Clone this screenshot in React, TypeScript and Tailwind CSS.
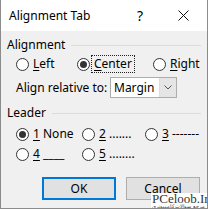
import React from "react";

function Radio({ checked }: { checked?: boolean }) {
  return (
    <span className="flex h-[13px] w-[13px] shrink-0 items-center justify-center rounded-full border border-[#333333] bg-white">
      {checked && <span className="h-[7px] w-[7px] rounded-full bg-[#333333]" />}
    </span>
  );
}

function Option({
  checked,
  focus,
  u,
  rest,
  className,
}: {
  checked?: boolean;
  focus?: boolean;
  u: string;
  rest: string;
  className?: string;
}) {
  return (
    <div className={"flex items-center " + (className ?? "")}>
      <Radio checked={checked} />
      <span
        className={
          "ml-[2px] px-[2px] leading-[16px] " +
          (focus ? "outline outline-1 outline-dotted outline-[#222]" : "outline outline-1 outline-transparent")
        }
      >
        <span className="underline underline-offset-2">{u}</span>
        {rest}
      </span>
    </div>
  );
}

function GroupHeader({ label }: { label: string }) {
  return (
    <div className="flex h-[16px] items-center">
      <span className="leading-[16px]">{label}</span>
      <div className="ml-[6px] mr-[6px] h-px flex-1 bg-[#dcdcdc]" />
    </div>
  );
}

export default function App() {
  return (
    <div
      className="relative h-[209px] w-[208px] overflow-hidden border-x border-b border-[#8c8c8c] bg-[#f0f0f0] text-[12px] text-black"
      style={{ fontFamily: '"Noto Sans", "Open Sans", sans-serif' }}
    >
      {/* title bar */}
      <div className="flex h-[31px] items-center bg-white pl-[8px]">
        <span className="flex-1">Alignment Tab</span>
        <span className="mr-[35px] text-[14px]">?</span>
        <svg width="11" height="11" viewBox="0 0 11 11" className="mr-[18px]">
          <path d="M0.5 0.5 L10.5 10.5 M10.5 0.5 L0.5 10.5" stroke="#111" strokeWidth="1" />
        </svg>
      </div>

      <div className="pl-[6px]">
        <div className="mt-[6px]">
          <GroupHeader label="Alignment" />
        </div>

        <div className="mt-[3px] flex h-[16px] items-center pl-[9px]">
          <Option u="L" rest="eft" className="w-[61px]" />
          <Option u="C" rest="enter" checked focus className="w-[76px]" />
          <Option u="R" rest="ight" />
        </div>

        <div className="mt-[5px] flex h-[21px] items-center pl-[9px]">
          <span className="w-[94px]">Align relative to:</span>
          <div className="flex h-[21px] w-[67px] border border-[#adadad] bg-white">
            <span className="flex-1 pl-[3px] leading-[19px]">Margin</span>
            <div className="flex w-[17px] items-center justify-center border-l border-[#dcdcdc] bg-[#e5e5e5]">
              <svg width="8" height="5" viewBox="0 0 8 5">
                <path d="M0.5 0.5 L4 4 L7.5 0.5" stroke="#555" strokeWidth="1" fill="none" />
              </svg>
            </div>
          </div>
        </div>

        <div className="mt-[7px]">
          <GroupHeader label="Leader" />
        </div>

        <div className="mt-[5px] flex h-[16px] items-center pl-[9px]">
          <Option u="1" rest=" None" checked className="w-[66px]" />
          <Option u="2" rest=" ......." className="w-[63px]" />
          <Option u="3" rest=" -------" />
        </div>

        <div className="mt-[4px] flex h-[16px] items-center pl-[9px]">
          <Option u="4" rest=" ____" className="w-[66px]" />
          <Option u="5" rest=" ........" />
        </div>

        <div className="mt-[15px] flex gap-[10px] pl-[35px]">
          <button className="h-[23px] w-[74px] border-2 border-[#0078d7] bg-[#e1e1e1] leading-[19px]">OK</button>
          <button className="h-[23px] w-[74px] border border-[#adadad] bg-[#e1e1e1] leading-[21px]">Cancel</button>
        </div>
      </div>

      {/* watermark */}
      <div className="absolute bottom-0 right-0 flex h-[15px] w-[56px] flex-col items-start bg-white pl-[1px]">
        <span
          className="text-[13px] leading-[11px] text-[#333]"
          style={{ fontFamily: '"Liberation Serif", serif' }}
        >
          PCeloob.Ir
        </span>
        <span className="text-[5px] leading-[5px] text-[#333]" dir="rtl">
          مرجع سوالات کامپیوتری
        </span>
      </div>
    </div>
  );
}
